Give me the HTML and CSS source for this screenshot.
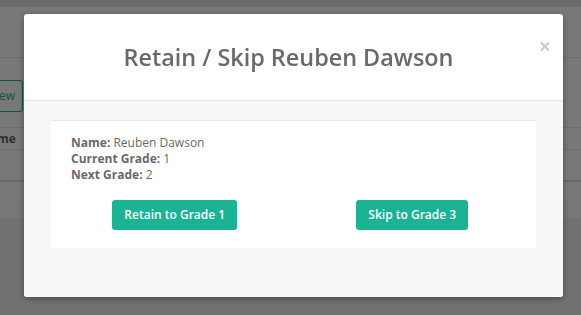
FILE: index.html
```html
<!DOCTYPE html>
<html>
<head>
<meta charset="utf-8">
<link rel="stylesheet" href="styles.css">
</head>
<body>
<div class="page">
  <div class="topbar"></div>
  <div class="toolbar"></div>
  <div class="actions"><span class="btn-outline">View</span></div>
  <div class="table">
    <div class="thead"><span class="th">Name</span></div>
    <div class="trow"></div>
    <div class="trow alt"></div>
  </div>
</div>
<div class="backdrop"></div>
<div class="modal">
  <div class="modal-header">
    <h4 class="modal-title">Retain / Skip Reuben Dawson</h4>
    <span class="close">&times;</span>
  </div>
  <div class="modal-body">
    <div class="panel">
      <div class="info">
        <div><b>Name:</b> Reuben Dawson</div>
        <div><b>Current Grade:</b> 1</div>
        <div><b>Next Grade:</b> 2</div>
      </div>
      <div class="btn-row">
        <div class="col"><button class="btn">Retain to Grade 1</button></div>
        <div class="col"><button class="btn">Skip to Grade 3</button></div>
      </div>
    </div>
  </div>
</div>
</body>
</html>
```
FILE: styles.css
```css
html, body {
  margin: 0;
  padding: 0;
  width: 581px;
  height: 315px;
  overflow: hidden;
  font-family: "Open Sans", "Liberation Sans", sans-serif;
  color: #676a6c;
  background: #f3f3f4;
}
.page {
  display: flex;
  flex-direction: column;
}
.topbar {
  height: 7px;
  background: #e2e2e2;
}
.toolbar {
  height: 50px;
  background: #fff;
  border-bottom: 1px solid #e7eaec;
}
.actions {
  height: 70px;
  background: #fff;
  padding-top: 22px;
  box-sizing: border-box;
  border-bottom: 1px solid #e7eaec;
}
.btn-outline {
  display: inline-block;
  margin-left: -20px;
  width: 43px;
  height: 32px;
  box-sizing: border-box;
  border: 1px solid #1ab394;
  border-radius: 3px;
  color: #1ab394;
  font-size: 12px;
  line-height: 30px;
  text-align: right;
  padding-right: 7px;
}
.table {
  background: #fff;
}
.thead {
  height: 21px;
  border-bottom: 1px solid #e7eaec;
}
.th {
  display: block;
  margin-left: -20px;
  font-weight: 700;
  font-size: 12px;
  line-height: 21px;
  color: #676a6c;
}
.trow {
  height: 30px;
  border-bottom: 2px solid #dedede;
}
.trow.alt {
  height: 18px;
  margin-top: 18px;
  border-bottom: 0;
  background: #fcfcfc;
}
.backdrop {
  position: fixed;
  inset: 0;
  background: rgba(0, 0, 0, 0.53);
}
.modal {
  position: absolute;
  top: 14px;
  left: 24px;
  width: 539px;
  height: 283px;
  background: #fff;
  border-radius: 3px;
  box-shadow: 0 2px 6px rgba(0, 0, 0, 0.35);
  display: flex;
  flex-direction: column;
  overflow: hidden;
}
.modal-header {
  position: relative;
  height: 87px;
  box-sizing: border-box;
  border-bottom: 1px solid #e5e5e5;
  display: flex;
  align-items: center;
  justify-content: center;
  padding-right: 10px;
}
.modal-title {
  margin: 0;
  font-size: 23.4px;
  font-weight: 600;
  color: #676a6c;
  line-height: 30px;
  padding-bottom: 1px;
}
.close {
  position: absolute;
  right: 12px;
  top: 22px;
  font-size: 21px;
  font-weight: 700;
  color: #000;
  opacity: 0.2;
  line-height: 1;
}
.modal-body {
  flex: 1;
  background: #f8f8fa;
  padding: 19px 27px 0;
}
.panel {
  background: #fff;
  border-top: 1px solid #e7eaec;
  padding: 14px 20px 18px;
}
.info {
  font-size: 12px;
  line-height: 16px;
  color: #676a6c;
}
.info b {
  font-weight: 700;
}
.btn-row {
  display: grid;
  grid-template-columns: 1fr 1fr;
  column-gap: 30px;
  margin-top: 17px;
}
.col {
  display: flex;
  justify-content: center;
}
.btn {
  font-family: "Open Sans", "Liberation Sans", sans-serif;
  font-size: 12px;
  font-weight: 600;
  line-height: 18px;
  padding: 6px 12px;
  border: 0;
  border-radius: 3px;
  background: #1ab394;
  color: #fff;
}
```
